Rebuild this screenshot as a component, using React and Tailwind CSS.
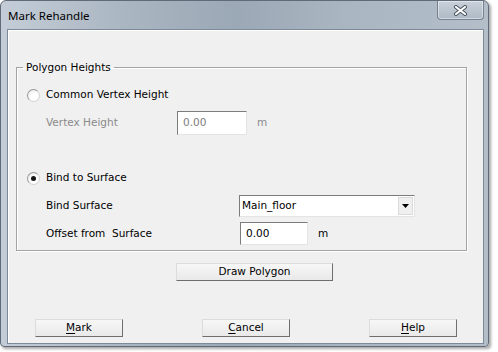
const ui = "font-['DejaVu_Sans',sans-serif] text-[10.5px] text-black";

function Radio({ checked }) {
  return (
    <span className="w-[13px] h-[13px] rounded-full border border-[#9a9a9a] border-r-[#d4d4d4] border-b-[#d4d4d4] bg-[radial-gradient(circle_at_60%_60%,#ffffff_35%,#e2e2e2_100%)] flex items-center justify-center">
      {checked && <span className="w-[5px] h-[5px] rounded-full bg-[#151515]" />}
    </span>
  );
}

function Field({ value, disabled, className }) {
  return (
    <div
      className={`h-full bg-white border border-[#e4e4e4] border-t-[#7c7c7c] border-l-[#7c7c7c] flex items-center pl-[5px] ${
        disabled ? "text-[#7d7d7d]" : "text-black"
      } ${className}`}
    >
      {value}
    </div>
  );
}

function Btn({ children, className }) {
  return (
    <button
      className={`h-[18px] flex items-center justify-center bg-[linear-gradient(#f7f7f7,#e9e9e9)] border border-[#dcdcdc] border-r-[#6e6e6e] border-b-[#6e6e6e] ${className}`}
    >
      {children}
    </button>
  );
}

export default function App() {
  return (
    <div className="w-[498px] h-[352px] bg-white">
      <div className="w-[489px] h-[347px] flex flex-col rounded-t-[6px] rounded-b-[4px] border border-[#5f6b78] bg-[linear-gradient(90deg,#c4cdd7_0%,#aab6c2_25%,#9ba8b5_48%,#a9b5c1_70%,#b3bec9_100%)] shadow-[2px_2px_3px_rgba(0,0,0,0.35)] pl-[6px] pr-[4px] pb-[2px]">
        {/* Title bar */}
        <div className="h-[28px] flex justify-between shrink-0">
          <span className="font-['Noto_Sans',sans-serif] text-[11.5px] text-black pl-[1px] pt-[7px] leading-[16px]">
            Mark Rehandle
          </span>
          <div className="w-[47px] h-[19px] rounded-b-[4px] border border-t-0 border-[#76828f] bg-[linear-gradient(#c9d1da,#aeb9c5)] shadow-[inset_0_0_0_1px_rgba(255,255,255,0.45)] flex items-center justify-center">
            <svg width="15" height="11" viewBox="0 0 15 11">
              <path d="M3 2 L12 9 M12 2 L3 9" stroke="#46505a" strokeWidth="4" strokeLinecap="round" />
              <path d="M3 2 L12 9 M12 2 L3 9" stroke="#ffffff" strokeWidth="2.2" strokeLinecap="round" />
            </svg>
          </div>
        </div>

        {/* Client area */}
        <div className={`flex-1 flex flex-col border border-[#7d8a97] bg-[#f0f0f0] shadow-[inset_1px_1px_0_#ffffff] ${ui}`}>
          <fieldset className="ml-[8px] mt-[31px] w-[451px] h-[190px] border border-[#a3a3a3] shadow-[1px_1px_0_#ffffff,inset_1px_1px_0_#ffffff]">
            <legend className="ml-[6px] px-[3px] leading-[13px]">Polygon Heights</legend>

            <div className="flex flex-col pl-[10px]">
              <div className="h-[24px] mt-[9px] flex items-center gap-[6px]">
                <Radio />
                <span>Common Vertex Height</span>
              </div>

              <div className="h-[24px] mt-[4px] flex items-center pl-[19px] text-[#8a8a8a]">
                <span className="w-[131px]">Vertex Height</span>
                <Field value="0.00" disabled className="w-[70px]" />
                <span className="ml-[10px]">m</span>
              </div>

              <div className="h-[24px] mt-[31px] flex items-center gap-[6px]">
                <Radio checked />
                <span>Bind to Surface</span>
              </div>

              <div className="h-[22px] mt-[5px] flex items-center pl-[19px]">
                <span className="w-[193px]">Bind Surface</span>
                <div className="w-[176px] h-full bg-white border border-[#e4e4e4] border-t-[#7c7c7c] border-l-[#7c7c7c] flex items-center">
                  <span className="flex-1 pl-[2px]">Main_floor</span>
                  <span className="w-[15px] h-[18px] mr-[1px] bg-[#f0f0f0] border border-[#dadada] flex items-center justify-center">
                    <svg width="7" height="4" viewBox="0 0 7 4">
                      <path d="M0 0 H7 L3.5 4 Z" fill="#000" />
                    </svg>
                  </span>
                </div>
              </div>

              <div className="h-[23px] mt-[5px] flex items-center pl-[19px]">
                <span className="w-[194px]">Offset from &nbsp;Surface</span>
                <Field value="0.00" className="w-[68px]" />
                <span className="ml-[10px]">m</span>
              </div>
            </div>
          </fieldset>

          <Btn className="ml-[168px] mt-[12px] w-[157px]">Draw Polygon</Btn>

          <div className="mt-[38px] ml-[27px] flex gap-[79px]">
            <Btn className="w-[88px]">
              <span className="underline underline-offset-2">M</span>ark
            </Btn>
            <Btn className="w-[88px]">
              <span className="underline underline-offset-2">C</span>ancel
            </Btn>
            <Btn className="w-[88px]">
              <span className="underline underline-offset-2">H</span>elp
            </Btn>
          </div>
        </div>
      </div>
    </div>
  );
}
